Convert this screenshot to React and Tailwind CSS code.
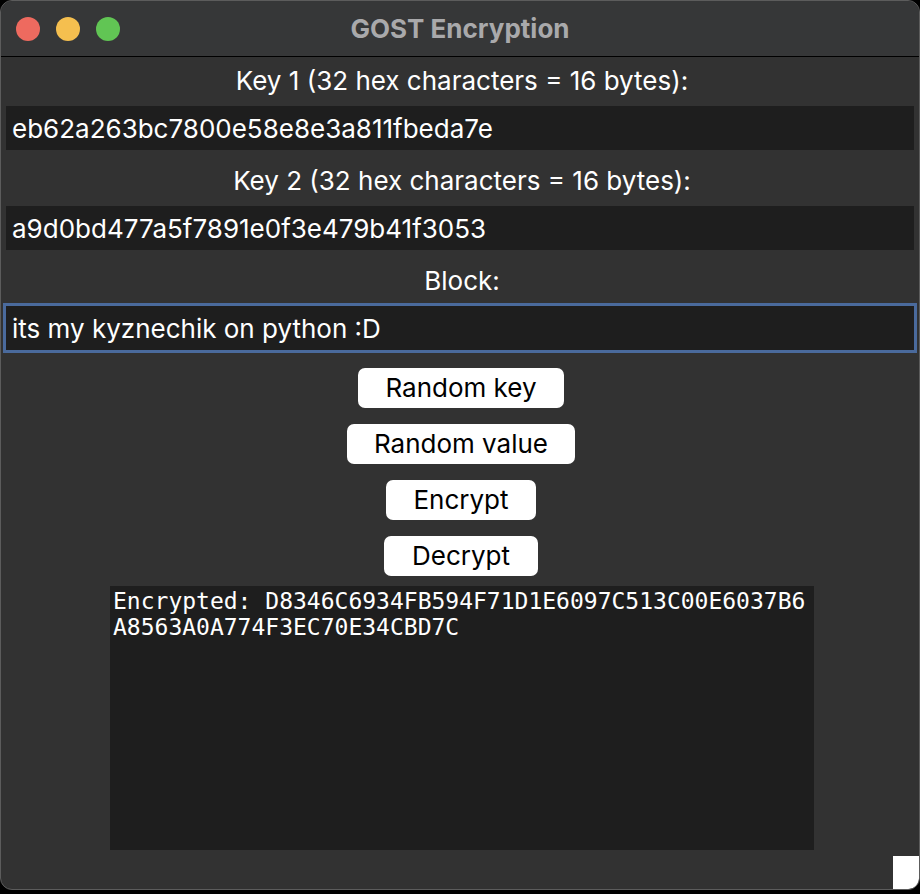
import { useState } from "react";

export default function App() {
  const [key1, setKey1] = useState("eb62a263bc7800e58e8e3a811fbeda7e");
  const [key2, setKey2] = useState("a9d0bd477a5f7891e0f3e479b41f3053");
  const [block, setBlock] = useState("its my kyznechik on python :D");

  const output =
    "Encrypted: D8346C6934FB594F71D1E6097C513C00E6037B6A8563A0A774F3EC70E34CBD7C";

  const buttons = [
    { label: "Random key", w: "w-[206px]" },
    { label: "Random value", w: "w-[228px]" },
    { label: "Encrypt", w: "w-[150px]" },
    { label: "Decrypt", w: "w-[154px]" },
  ];

  return (
    <div className="w-[920px] h-[894px] bg-black font-['Inter','Liberation_Sans',sans-serif]">
      <div className="h-[890px] flex flex-col rounded-[12px] overflow-hidden bg-[#323232] border border-[#5c5c5c]">
        {/* Title bar */}
        <div className="relative h-[56px] shrink-0 flex items-center bg-[#363738] border-b border-black">
          <div className="flex gap-[16px] pl-[15px]">
            <span className="w-[24px] h-[24px] rounded-full bg-[#ee6a5f]" />
            <span className="w-[24px] h-[24px] rounded-full bg-[#f5bf4f]" />
            <span className="w-[24px] h-[24px] rounded-full bg-[#61c554]" />
          </div>
          <div className="absolute inset-0 flex items-center justify-center text-[26px] font-bold text-[#a9a9ab] pointer-events-none">
            GOST Encryption
          </div>
        </div>

        {/* Form */}
        <div className="flex-1 flex flex-col items-center px-[2px] text-white">
          <label className="mt-[10px] h-[28px] text-[26px] leading-[28px] translate-x-[2px]">
            Key 1 (32 hex characters = 16 bytes):
          </label>
          <input
            value={key1}
            onChange={(e) => setKey1(e.target.value)}
            className="mt-[8px] w-full h-[50px] px-[6px] border-[3px] border-transparent bg-[#1e1e1e] bg-clip-padding text-[26px] outline-none"
          />

          <label className="mt-[14px] h-[28px] text-[26px] leading-[28px] translate-x-[2px]">
            Key 2 (32 hex characters = 16 bytes):
          </label>
          <input
            value={key2}
            onChange={(e) => setKey2(e.target.value)}
            className="mt-[8px] w-full h-[50px] px-[6px] border-[3px] border-transparent bg-[#1e1e1e] bg-clip-padding text-[26px] outline-none"
          />

          <label className="mt-[14px] h-[28px] text-[26px] leading-[28px] translate-x-[2px]">
            Block:
          </label>
          <input
            value={block}
            onChange={(e) => setBlock(e.target.value)}
            className="mt-[8px] w-full h-[50px] px-[6px] border-[3px] border-[#4a6a9c] bg-[#1e1e1e] text-[26px] outline-none"
          />

          <div className="mt-[15px] flex flex-col items-center gap-[16px] translate-x-[1px]">
            {buttons.map((b) => (
              <button
                key={b.label}
                className={`${b.w} h-[40px] rounded-[7px] bg-white text-black text-[26px] leading-none`}
              >
                {b.label}
              </button>
            ))}
          </div>

          <div className="mt-[10px] ml-[4px] w-[704px] h-[264px] bg-[#1e1e1e] px-[2px] pl-[3px] py-[2px] font-['DejaVu_Sans_Mono',monospace] text-[23px] leading-[26px] text-white break-all">
            {output}
          </div>

          <div className="mt-auto w-full flex justify-end -mr-[4px]">
            <div className="w-[26px] h-[33px] bg-white rounded-br-[10px]" />
          </div>
        </div>
      </div>
    </div>
  );
}
